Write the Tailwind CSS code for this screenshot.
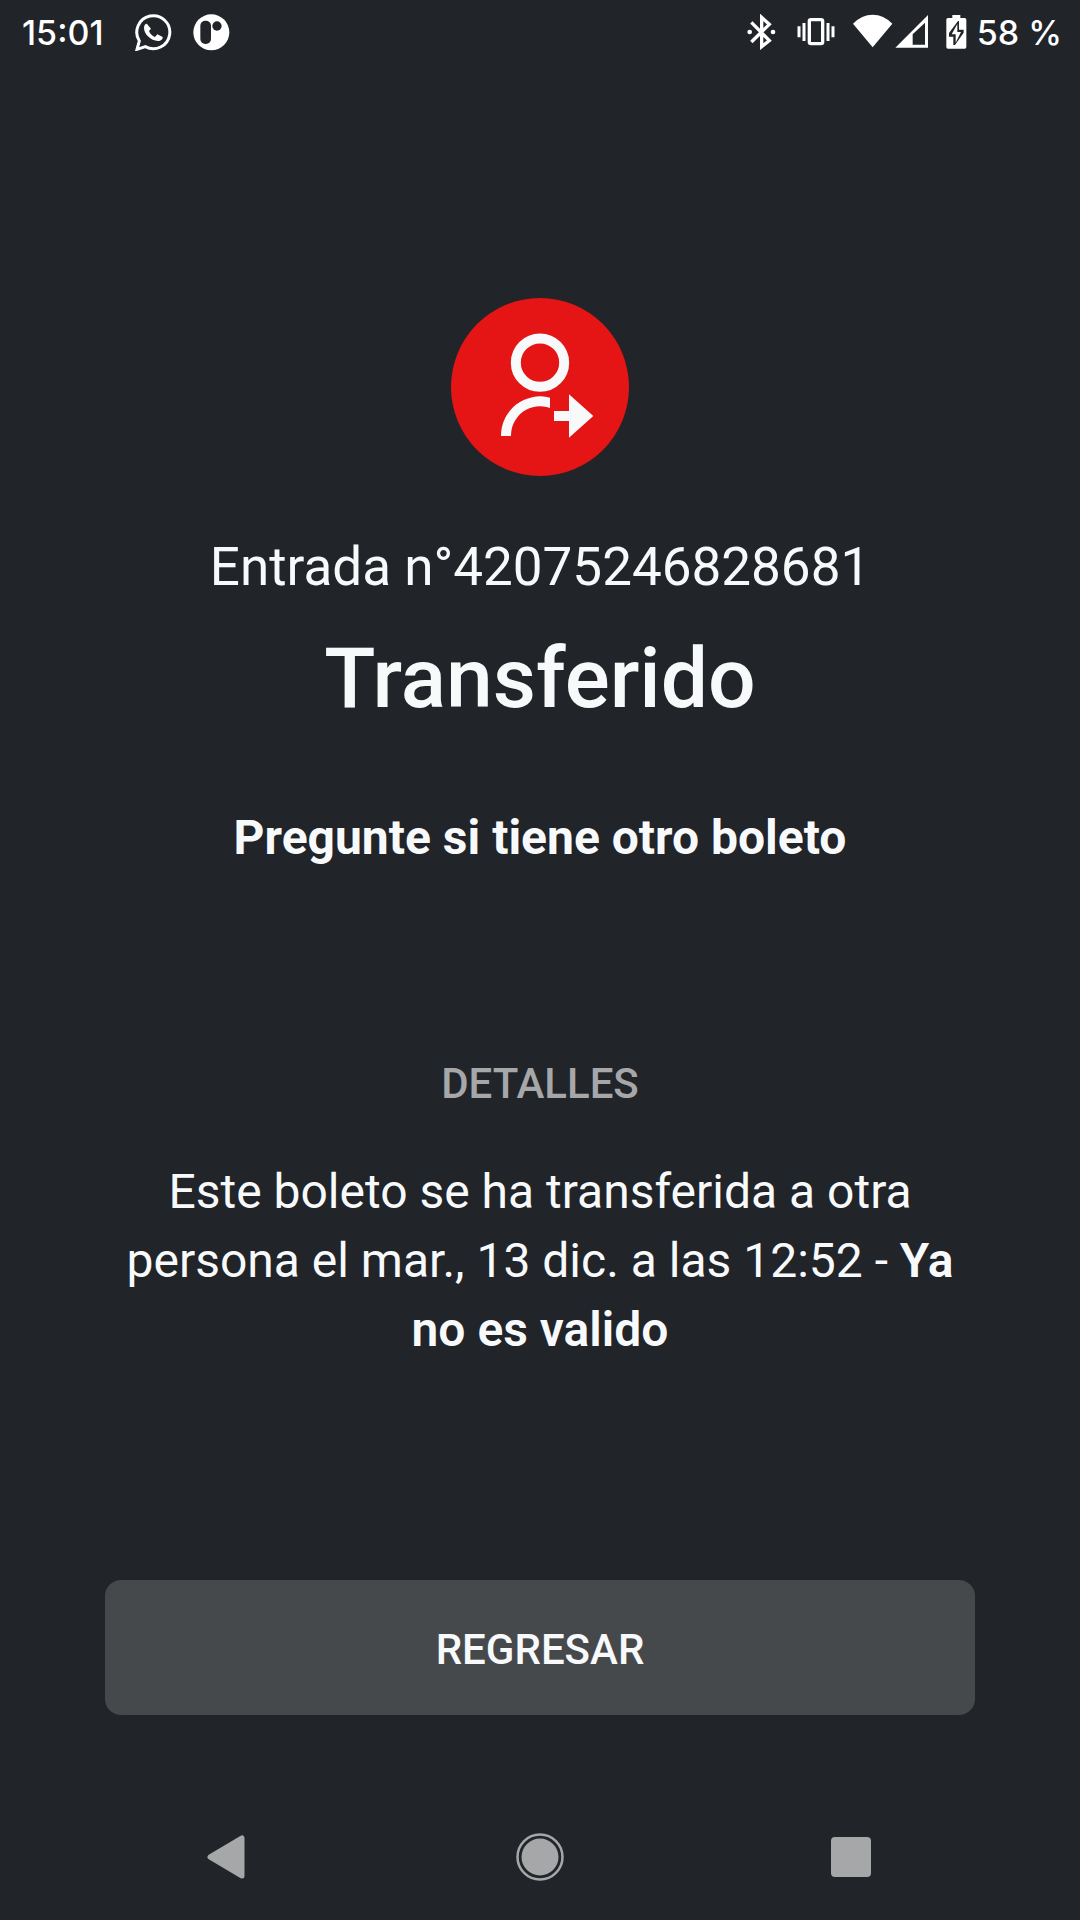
<!DOCTYPE html>
<html lang="es">
<head>
<meta charset="utf-8">
<meta name="viewport" content="width=device-width, initial-scale=1">
<title>Entrada transferida</title>
<script src="https://cdn.jsdelivr.net/npm/@tailwindcss/browser@4"></script>
</head>
<body class="flex min-h-screen flex-col bg-[#212429] font-['Roboto',sans-serif] text-[#f8f9fb]">

<!-- Status bar -->
<header class="flex h-16 items-center justify-between pr-[18px] pl-[22px] font-['Inter',sans-serif] text-[34px] leading-10 font-medium text-white">
  <div class="flex items-center">
    <time class="w-[113px] pt-0.5">15:01</time>
    <svg class="mr-[21px] h-[37px] w-[37px]" viewBox="404 40 111 111" role="img" aria-label="WhatsApp">
      <path d="M410 146L417 121A49.500 49.500 0 1 1 435 138Z" fill="none" stroke="#fff" stroke-width="9"/>
      <path d="M440 70c-3-2-9 3-9 12 0 18 20 38 42 39 9 0 15-6 14-12l-16-8-7 8c-9-3-15-10-18-18l6-7z" fill="#fff"/>
    </svg>
    <svg class="h-[37px] w-[37px]" viewBox="578 40 111 111" aria-hidden="true">
      <circle cx="633" cy="95" r="54" fill="#fff"/>
      <rect x="600" y="60" width="32" height="70" rx="15" fill="#212429"/>
      <circle cx="650" cy="76" r="14" fill="#212429"/>
    </svg>
  </div>
  <div class="flex items-center">
    <svg class="mr-5 h-[36px] w-[30px]" viewBox="48 40 90 108" role="img" aria-label="Bluetooth">
      <path d="M61 65L115 120L92 138V50L115 71L61 124" fill="none" stroke="#fff" stroke-width="10"/>
      <circle cx="56" cy="94" r="7" fill="#fff"/><circle cx="126" cy="94" r="7" fill="#fff"/>
    </svg>
    <svg class="mr-[18px] h-[30px] w-[38px]" viewBox="196 49 114 90" role="img" aria-label="Vibración">
      <rect x="233" y="57" width="40" height="72" rx="5" fill="none" stroke="#fff" stroke-width="10"/>
      <path d="M217 67V121M289 67V121M202 77V110M304 77V110" stroke="#fff" stroke-width="9"/>
    </svg>
    <svg class="h-[36px] w-[76px]" viewBox="366 40 228 108" role="img" aria-label="Wi-Fi y red móvil">
      <path d="M366 69Q392 42 425 42T484 69L425 140Z" fill="#fff"/>
      <path fill-rule="evenodd" d="M493 141L591 43V141ZM545 132H582V66L545 101Z" fill="#fff"/>
    </svg>
    <svg class="mr-[10px] ml-[17px] h-[36px] w-[21px]" viewBox="647 40 63 108" role="img" aria-label="Batería cargando">
      <path d="M666 43H690V52H703Q708 52 708 57V139Q708 144 703 144H653Q648 144 648 139V57Q648 52 653 52H666Z" fill="#fff"/>
      <path d="M683 61L656 97V108H669V133H674L700 96V87H686V61Z" fill="#212429"/>
      <path d="M681 70L664 101H676V126L692 94H681Z" fill="#fff"/>
    </svg>
    <span class="pt-0.5">58 %</span>
  </div>
</header>

<main class="flex grow flex-col items-center px-[105px] pt-[234px] pb-[79px] text-center">
  <svg class="h-[178px] w-[178px]" viewBox="33 24 534 534" aria-hidden="true">
    <circle cx="300" cy="291" r="267" fill="#e51515"/>
    <circle cx="300" cy="218" r="72.500" fill="none" stroke="#f8f9fb" stroke-width="30"/>
    <path d="M183 438A117 118 0 0 1 330 323V354A87 88 0 0 0 213 438Z" fill="#f8f9fb"/>
    <path d="M342 363H387V313L460 378L387 443V393H342Z" fill="#f8f9fb"/>
  </svg>
  <p class="mt-[59px] text-[53px] leading-[64px]">Entrada n°42075246828681</p>
  <h1 class="mt-[31px] text-[84px] leading-[98px] font-medium">Transferido</h1>
  <p class="mt-[82px] text-5xl leading-[56px] font-bold">Pregunte si tiene otro boleto</p>
  <h2 class="mt-[193px] text-[42px] leading-[50px] font-medium text-[#a6a7a9]">DETALLES</h2>
  <p class="mt-12 text-5xl leading-[69px]">Este boleto se ha transferida a otra persona el mar., 13 dic. a las 12:52 - <strong class="font-semibold">Ya no es valido</strong></p>
  <button type="button" class="mt-auto h-[135px] w-full rounded-2xl bg-[#46494b] pt-1 text-[42px] leading-[50px] font-medium">REGRESAR</button>
</main>

<!-- System navigation -->
<nav class="grid h-[126px] grid-cols-3 place-items-center px-[70px]" aria-label="Sistema">
  <button type="button" aria-label="Atrás" class="p-2">
    <svg class="h-12 w-12" viewBox="0 0 48 48"><path d="M7 24L39 5V43Z" fill="#a6a7a9" stroke="#a6a7a9" stroke-width="5" stroke-linejoin="round"/></svg>
  </button>
  <button type="button" aria-label="Inicio" class="p-2">
    <svg class="h-12 w-12" viewBox="0 0 48 48"><circle cx="24" cy="24" r="22.500" fill="none" stroke="#a6a7a9" stroke-width="2.500"/><circle cx="24" cy="24" r="18.500" fill="#a6a7a9"/></svg>
  </button>
  <button type="button" aria-label="Recientes" class="p-2">
    <svg class="h-12 w-12" viewBox="0 0 48 48"><rect x="2" y="4" width="40" height="40" rx="4" fill="#a6a7a9"/></svg>
  </button>
</nav>
</body>
</html>
